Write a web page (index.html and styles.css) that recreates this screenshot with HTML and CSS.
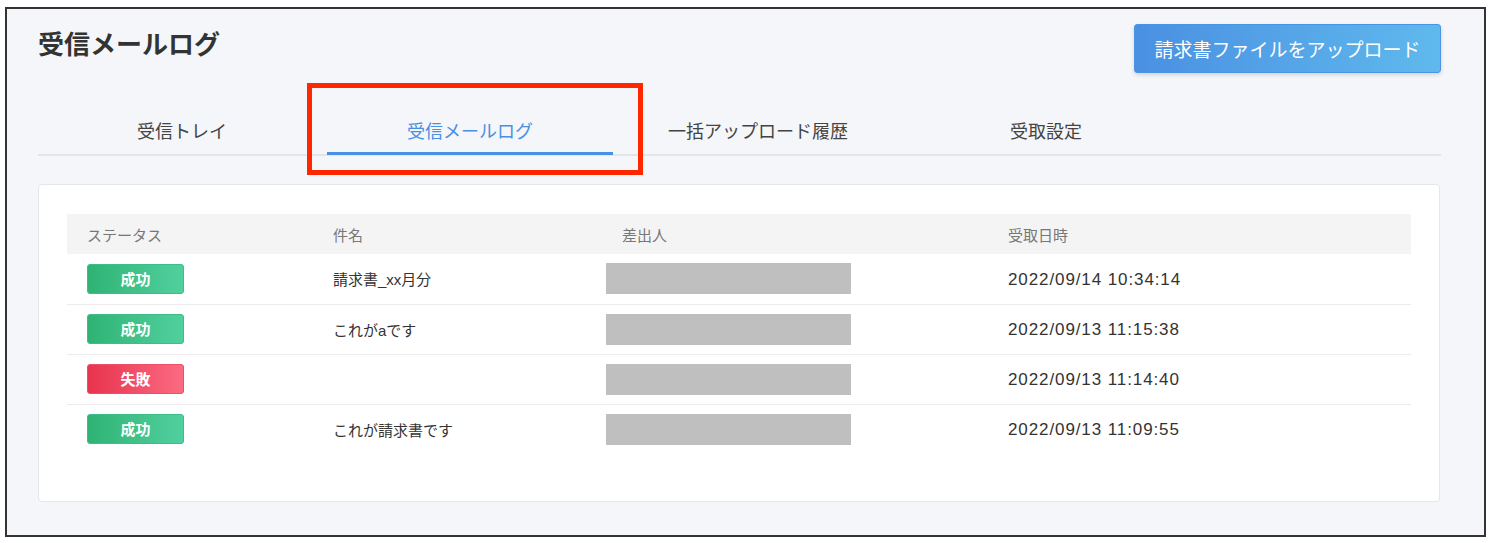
FILE: index.html
```html
<!DOCTYPE html>
<html lang="ja">
<head>
    <meta charset="UTF-8">
    <meta name="viewport" content="width=device-width, initial-scale=1.0">
    <title>受信メールログ</title>
    <link rel="stylesheet" href="styles.css">
</head>
<body>
    <div class="frame">
        <header class="page-header">
            <h1>受信メールログ</h1>
            <button class="upload-btn">請求書ファイルをアップロード</button>
        </header>

        <nav class="tabs">
            <a class="tab">受信トレイ</a>
            <a class="tab active">受信メールログ</a>
            <a class="tab">一括アップロード履歴</a>
            <a class="tab">受取設定</a>
        </nav>

        <!-- 注目箇所の赤枠 -->
        <div class="highlight"></div>

        <section class="card">
            <table class="log-table">
                <colgroup>
                    <col class="col-status">
                    <col class="col-subject">
                    <col class="col-sender">
                    <col class="col-date">
                </colgroup>
                <thead>
                    <tr>
                        <th>ステータス</th>
                        <th>件名</th>
                        <th>差出人</th>
                        <th>受取日時</th>
                    </tr>
                </thead>
                <tbody>
                    <tr>
                        <td><span class="badge ok">成功</span></td>
                        <td>請求書_xx月分</td>
                        <td class="sender"><span class="masked"></span></td>
                        <td class="date">2022/09/14 10:34:14</td>
                    </tr>
                    <tr>
                        <td><span class="badge ok">成功</span></td>
                        <td>これがaです</td>
                        <td class="sender"><span class="masked"></span></td>
                        <td class="date">2022/09/13 11:15:38</td>
                    </tr>
                    <tr>
                        <td><span class="badge ng">失敗</span></td>
                        <td></td>
                        <td class="sender"><span class="masked"></span></td>
                        <td class="date">2022/09/13 11:14:40</td>
                    </tr>
                    <tr>
                        <td><span class="badge ok">成功</span></td>
                        <td>これが請求書です</td>
                        <td class="sender"><span class="masked"></span></td>
                        <td class="date">2022/09/13 11:09:55</td>
                    </tr>
                </tbody>
            </table>
        </section>
    </div>
</body>
</html>
```

FILE: styles.css
```css
* {
    box-sizing: border-box;
    margin: 0;
    padding: 0;
}
body {
    font-family: "Liberation Sans", "Noto Sans CJK JP", sans-serif;
    background-color: #fff;
    color: #333;
}
.frame {
    position: relative;
    width: 1481px;
    height: 530px;
    margin: 7px 0 0 5px;
    border: 2px solid #333;
    background-color: #f5f6f9;
    padding: 15px 43px 0 31px;
}
.page-header {
    display: flex;
    justify-content: space-between;
    align-items: flex-start;
}
.page-header h1 {
    font-family: "Noto Sans CJK JP", sans-serif;
    font-size: 26px;
    font-weight: 700;
    line-height: 30px;
    margin-top: 4px;
    color: #333;
}
.upload-btn {
    width: 307px;
    height: 49px;
    border: 1px solid #4b93e3;
    border-radius: 3px;
    background: linear-gradient(90deg, #4a90e2, #5fb9ed);
    box-shadow: 0 2px 4px rgba(0, 0, 0, 0.14);
    color: #fff;
    font-family: "Noto Sans CJK JP", sans-serif;
    font-size: 19px;
    cursor: pointer;
}
.tabs {
    display: flex;
    margin-top: 45px;
    border-bottom: 2px solid #e3e5ea;
}
.tab {
    width: 288px;
    text-align: center;
    font-family: "Noto Sans CJK JP", sans-serif;
    font-size: 18px;
    line-height: 24px;
    color: #444;
    padding-bottom: 10px;
    border-bottom: 3px solid transparent;
    margin-bottom: -1px;
}
.tab.active {
    color: #4a90e2;
    border-bottom-color: #4a90e2;
    margin-left: 1px;
    width: 286px;
}
.tab.active + .tab {
    margin-left: 1px;
}
.highlight {
    position: absolute;
    left: 300px;
    top: 74px;
    width: 336px;
    height: 92px;
    border: 5px solid #ff2600;
}
.card {
    margin-top: 28px;
    width: 1402px;
    height: 318px;
    background-color: #fff;
    border: 1px solid #e4e6ea;
    border-radius: 4px;
    padding: 29px 28px 0;
}
.log-table {
    width: 1344px;
    border-collapse: collapse;
    table-layout: fixed;
}
.col-status { width: 246px; }
.col-subject { width: 289px; }
.col-sender { width: 386px; }
.col-date { width: 423px; }
.log-table th {
    height: 40px;
    background-color: #f4f4f5;
    text-align: left;
    font-family: "Noto Sans CJK JP", sans-serif;
    font-size: 15px;
    font-weight: 400;
    color: #777;
    padding-left: 20px;
}
.log-table td {
    height: 50px;
    font-size: 15px;
    padding-left: 20px;
    color: #333;
    border-top: 1px solid #ececec;
}
.log-table tbody tr:first-child td {
    border-top: none;
}
.log-table td.sender {
    padding-left: 4px;
}
.log-table td.date {
    font-size: 17px;
    letter-spacing: 0.9px;
    padding-top: 2px;
}
.badge {
    display: block;
    width: 97px;
    height: 30px;
    line-height: 28px;
    border-radius: 3px;
    text-align: center;
    font-family: "Noto Sans CJK JP", sans-serif;
    font-size: 15px;
    font-weight: 700;
    color: #fff;
}
.badge.ok {
    background: linear-gradient(90deg, #2fb374, #51d09f);
    border: 1px solid #3cbf86;
}
.badge.ng {
    background: linear-gradient(90deg, #e8334e, #fb6b82);
    border: 1px solid #f04d67;
}
.masked {
    display: block;
    width: 245px;
    height: 31px;
    background-color: #bfbfbf;
}
```
